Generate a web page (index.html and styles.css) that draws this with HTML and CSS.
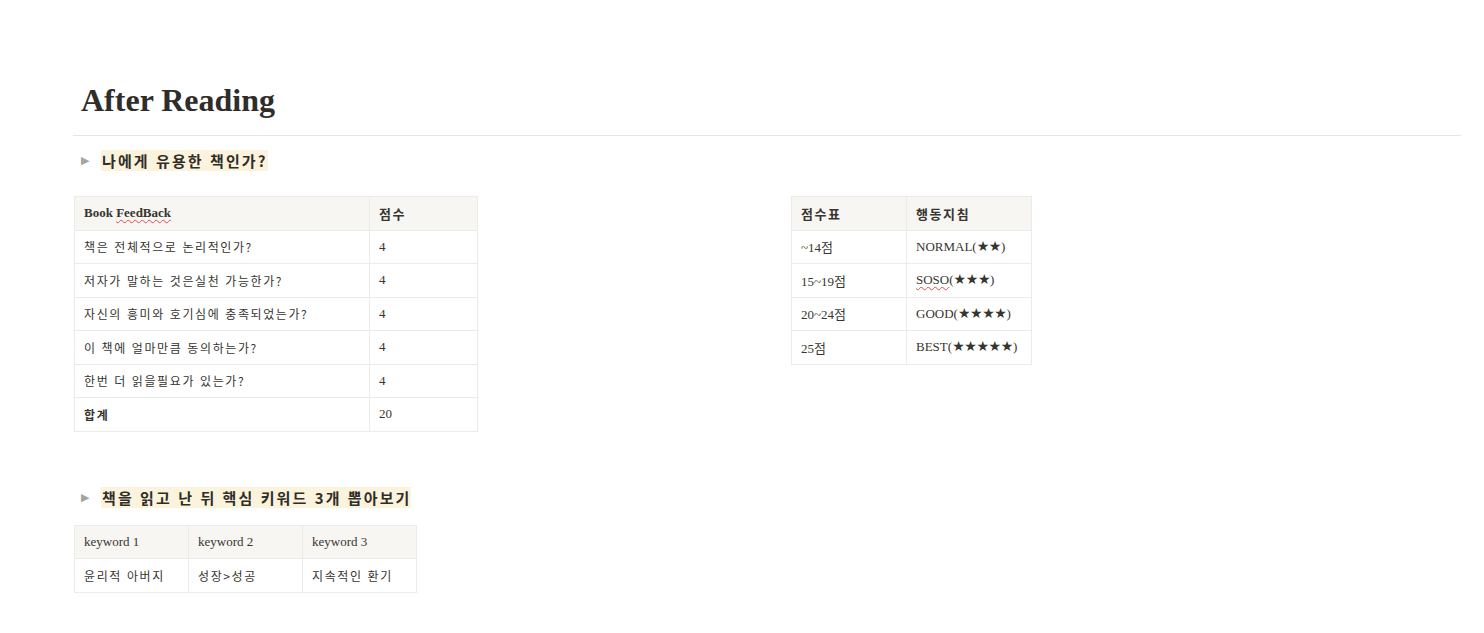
FILE: index.html
```html
<!DOCTYPE html>
<html lang="ko">
<head>
<meta charset="utf-8">
<title>After Reading</title>
<link rel="stylesheet" href="styles.css">
</head>
<body>
<main class="page">
  <h1 class="title">After Reading</h1>
  <div class="divider"></div>

  <div class="toggle">
    <span class="caret">&#9654;</span>
    <span class="mark">나에게 유용한 책인가?</span>
  </div>

  <div class="tables">
    <table class="tbl tbl-feedback">
      <tr class="head"><td class="c1 hd-en">Book <span class="typo">FeedBack</span></td><td class="c2 hd-ko">점수</td></tr>
      <tr><td>책은 전체적으로 논리적인가?</td><td class="num">4</td></tr>
      <tr><td>저자가 말하는 것은실천 가능한가?</td><td class="num">4</td></tr>
      <tr><td>자신의 흥미와 호기심에 충족되었는가?</td><td class="num">4</td></tr>
      <tr><td>이 책에 얼마만큼 동의하는가?</td><td class="num">4</td></tr>
      <tr><td>한번 더 읽을필요가 있는가?</td><td class="num">4</td></tr>
      <tr><td class="bold">합계</td><td class="num">20</td></tr>
    </table>

    <table class="tbl tbl-score">
      <tr class="head"><td class="s1 hd-ko">점수표</td><td class="s2 hd-ko">행동지침</td></tr>
      <tr><td class="en">~14점</td><td class="en">NORMAL(<span class="star">★★</span>)</td></tr>
      <tr><td class="en">15~19점</td><td class="en"><span class="typo">SOSO</span>(<span class="star">★★★</span>)</td></tr>
      <tr><td class="en">20~24점</td><td class="en">GOOD(<span class="star">★★★★</span>)</td></tr>
      <tr><td class="en">25점</td><td class="en">BEST(<span class="star">★★★★★</span>)</td></tr>
    </table>
  </div>

  <div class="toggle toggle-2">
    <span class="caret">&#9654;</span>
    <span class="mark">책을 읽고 난 뒤 핵심 키워드 3개 뽑아보기</span>
  </div>

  <table class="tbl tbl-keyword">
    <tr class="head"><td class="en">keyword 1</td><td class="en">keyword 2</td><td class="en">keyword 3</td></tr>
    <tr><td>윤리적 아버지</td><td>성장&gt;성공</td><td>지속적인 환기</td></tr>
  </table>
</main>
</body>
</html>
```

FILE: styles.css
```css
* { box-sizing: border-box; }

body {
  margin: 0;
  background: #ffffff;
  color: #37352f;
  font-family: "Liberation Serif", "Noto Sans CJK KR", serif;
}

.page {
  padding: 80px 23px 0 74px;
}

.title {
  margin: 0;
  padding: 0 0 0 7px;
  font-family: "Liberation Serif", "DejaVu Serif", serif;
  font-weight: 700;
  font-size: 32px;
  line-height: 40px;
  color: #2f2d29;
}

.divider {
  margin: 15px 0 0 -1px;
  border-top: 1px solid #e6e6e4;
}

.toggle {
  display: flex;
  align-items: center;
  margin-top: 13px;
  padding-left: 7px;
  height: 22px;
}

.caret {
  width: 20px;
  font-size: 11px;
  color: #a5a4a1;
  font-family: "DejaVu Sans", sans-serif;
}

.mark {
  background: #fbf3db;
  font-family: "Noto Sans CJK KR", sans-serif;
  font-weight: 700;
  font-size: 15px;
  letter-spacing: 2.1px;
  line-height: 21px;
  padding: 0 0 0 1px;
  color: #2f2d29;
}

.tables {
  display: flex;
  align-items: flex-start;
  column-gap: 313px;
  margin-top: 25px;
}

.tbl {
  border-collapse: collapse;
  font-size: 13px;
  font-family: "Liberation Serif", "Noto Sans CJK KR", serif;
}

.tbl td {
  border: 1px solid #ebebe9;
  height: 33.5px;
  padding: 0 9px;
  vertical-align: middle;
  white-space: nowrap;
  color: #37352f;
}

.tbl td:not(.en):not(.num):not(.hd-en) {
  font-family: "Noto Sans CJK KR", sans-serif;
  font-size: 12px;
  letter-spacing: 1.6px;
}

.tbl .head td {
  background: #f7f6f3;
}

.hd-en {
  font-weight: 700;
  font-size: 13px;
}

.hd-ko,
.bold {
  font-weight: 700;
}

.tbl .hd-ko { font-size: 13px !important; }

.num { font-size: 13px; }

.c1 { width: 295px; }
.c2 { width: 108px; }

.tbl-score {
  table-layout: fixed;
  width: 240px;
}

.s1 { width: 115px; }
.s2 { width: 125px; }

.en { font-size: 13px; }

.star {
  font-family: "DejaVu Sans", sans-serif;
  font-size: 14px;
  line-height: 1;
  letter-spacing: -0.4px;
}

.typo {
  text-decoration: underline wavy #e5484d;
  text-decoration-thickness: 1px;
  text-underline-offset: 2px;
}

.toggle-2 {
  margin-top: 55px;
}

.tbl-keyword {
  margin-top: 16px;
}

.tbl-keyword td {
  width: 114px;
}
```
